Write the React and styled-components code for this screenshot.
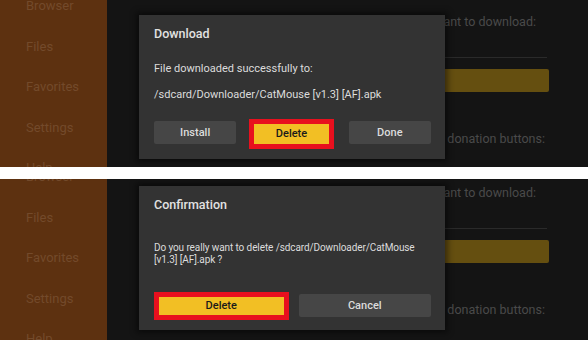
import styled, { createGlobalStyle } from 'styled-components';

const GlobalStyle = createGlobalStyle`
  html, body {
    margin: 0;
    padding: 0;
    background: #ffffff;
    font-family: Roboto, "Noto Sans", sans-serif;
  }
`;

const menuItems = ['Browser', 'Files', 'Favorites', 'Settings', 'Help'];

function Screen({ height, scroll, children }) {
  return (
    <Frame height={height}>
      <Sidebar>
        <MenuList scroll={scroll}>
          {menuItems.map((item) => (
            <MenuItem key={item}>{item}</MenuItem>
          ))}
        </MenuList>
      </Sidebar>
      <Main>
        <MainContent scroll={scroll}>
          <Label inset={13}>Enter the URL of the file you want to download:</Label>
          <UrlLine />
          <GoBar />
          <Label inset={4}>Please use these donation buttons:</Label>
        </MainContent>
      </Main>
      {children}
    </Frame>
  );
}

export default function App() {
  return (
    <>
      <GlobalStyle />
      <Page>
        <Screen height={167} scroll={0}>
          <Dialog top={15} height={144} bottom={15}>
            <Title>Download</Title>
            <Body>
              <Message>File downloaded successfully to:</Message>
              <Message>/sdcard/Downloader/CatMouse [v1.3] [AF].apk</Message>
            </Body>
            <Buttons>
              <Button>Install</Button>
              <Highlight edges="-2px 0 -5px -2px">
                <Button primary fill>Delete</Button>
              </Highlight>
              <Button>Done</Button>
            </Buttons>
          </Dialog>
        </Screen>
        <Divider />
        <Screen height={161} scroll={8}>
          <Dialog top={7} height={144} bottom={13}>
            <Title>Confirmation</Title>
            <Body>
              <SmallMessage>
                Do you really want to delete /sdcard/Downloader/CatMouse [v1.3] [AF].apk ?
              </SmallMessage>
            </Body>
            <Buttons wide>
              <Highlight edges="-2px -2px -3px 0">
                <Button primary fill>Delete</Button>
              </Highlight>
              <Button>Cancel</Button>
            </Buttons>
          </Dialog>
        </Screen>
      </Page>
    </>
  );
}

const Page = styled.div`
  width: 588px;
  height: 340px;
  display: flex;
  flex-direction: column;
  overflow: hidden;
  background: #ffffff;
`;

const Divider = styled.div`
  height: 12px;
  background: #ffffff;
  flex: none;
`;

const Frame = styled.div`
  position: relative;
  height: ${({ height }) => height}px;
  display: flex;
  overflow: hidden;
  flex: none;
  background: #141414;
`;

const Sidebar = styled.div`
  width: 107px;
  flex: none;
  background: #5d3110;
  overflow: hidden;
`;

const MenuList = styled.div`
  margin-top: ${({ scroll }) => -14 - scroll}px;
  display: flex;
  flex-direction: column;
`;

const MenuItem = styled.div`
  height: 40.5px;
  line-height: 40.5px;
  padding-left: 26px;
  font-size: 13px;
  color: #734a2b;
`;

const Main = styled.div`
  flex: 1;
  overflow: hidden;
`;

const MainContent = styled.div`
  margin-top: ${({ scroll }) => 14 - scroll}px;
  padding: 0 39px 0 60px;
  display: flex;
  flex-direction: column;
`;

const Label = styled.div`
  align-self: flex-end;
  margin-right: ${({ inset }) => inset}px;
  line-height: 15px;
  font-size: 12.5px;
  color: #4a4a4a;
  white-space: nowrap;
`;

const UrlLine = styled.div`
  height: 1px;
  background: #2a2a2a;
  margin: 28px 2px 11px 0;
`;

const GoBar = styled.div`
  height: 23px;
  background: #654f10;
  border-radius: 2px;
  margin-bottom: 39px;
`;

const Dialog = styled.div`
  position: absolute;
  left: 139px;
  top: ${({ top }) => top}px;
  width: 306px;
  height: ${({ height }) => height}px;
  box-sizing: border-box;
  padding: 11px 14px ${({ bottom }) => bottom}px 15px;
  background: #333333;
  box-shadow: 0 0 6px 3px rgba(0, 0, 0, 0.45);
  display: flex;
  flex-direction: column;
`;

const Title = styled.div`
  font-size: 12.5px;
  font-weight: 500;
  color: #e2e2e2;
  line-height: 16px;
`;

const Body = styled.div`
  flex: 1;
  display: flex;
  flex-direction: column;
  justify-content: center;
  gap: 10px;
`;

const Message = styled.div`
  font-size: 11px;
  color: #dcdcdc;
  line-height: 16px;
`;

const SmallMessage = styled.div`
  font-size: 10px;
  color: #dcdcdc;
  line-height: 12px;
  letter-spacing: -0.1px;
`;

const Buttons = styled.div`
  display: grid;
  grid-template-columns: ${({ wide }) => (wide ? '1fr 1fr' : '1fr 1fr 1fr')};
  gap: ${({ wide }) => (wide ? '12px' : '15px')};
  align-items: start;
`;

const Highlight = styled.div`
  border: 5px solid #e8101e;
  margin: ${({ edges }) => edges};
  align-self: stretch;
  display: flex;
`;

const Button = styled.div`
  flex: 1;
  height: ${({ fill }) => (fill ? 'auto' : '23px')};
  line-height: ${({ fill }) => (fill ? '18px' : '23px')};
  display: flex;
  align-items: center;
  justify-content: center;
  font-size: 11px;
  font-weight: 500;
  border-radius: ${({ fill }) => (fill ? '0' : '2px')};
  background: ${({ primary }) => (primary ? '#f2bf24' : '#464646')};
  color: ${({ primary }) => (primary ? '#1a1a1a' : '#dcdcdc')};
`;
